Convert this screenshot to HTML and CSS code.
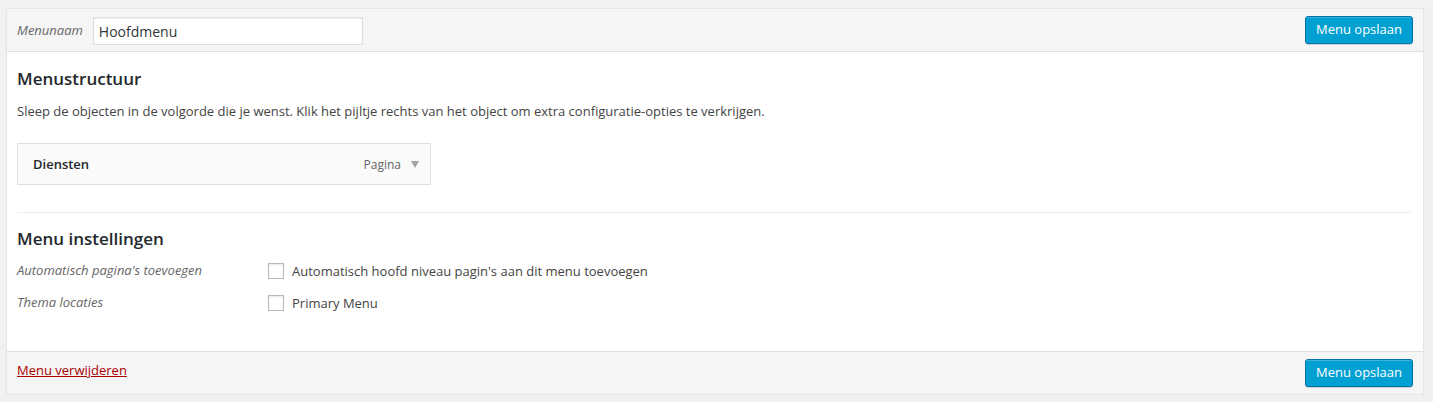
FILE: index.html
```html
<!DOCTYPE html>
<html lang="nl">
<head>
<meta charset="utf-8">
<title>Menu</title>
<link rel="stylesheet" href="styles.css">
</head>
<body>
<div class="menu-edit">
  <div class="menu-header">
    <label class="menu-name-label">Menunaam</label>
    <input class="menu-name" type="text" value="Hoofdmenu">
    <span class="spacer"></span>
    <button class="btn-primary">Menu opslaan</button>
  </div>
  <div class="menu-body">
    <h3 class="title">Menustructuur</h3>
    <p class="desc">Sleep de objecten in de volgorde die je wenst. Klik het pijltje rechts van het object om extra configuratie-opties te verkrijgen.</p>
    <div class="menu-item">
      <span class="item-title">Diensten</span>
      <span class="item-type">Pagina</span>
      <span class="item-arrow"></span>
    </div>
    <div class="settings">
      <h3 class="title">Menu instellingen</h3>
      <div class="setting-row">
        <span class="setting-label">Automatisch pagina's toevoegen</span>
        <label class="check"><span class="box"></span>Automatisch hoofd niveau pagin's aan dit menu toevoegen</label>
      </div>
      <div class="setting-row">
        <span class="setting-label">Thema locaties</span>
        <label class="check"><span class="box"></span>Primary Menu</label>
      </div>
    </div>
  </div>
  <div class="menu-footer">
    <a class="delete" href="#">Menu verwijderen</a>
    <span class="spacer"></span>
    <button class="btn-primary">Menu opslaan</button>
  </div>
</div>
</body>
</html>
```
FILE: styles.css
```css
html, body {
  margin: 0;
  padding: 0;
  background: #f1f1f1;
}
body {
  padding: 8px 9px 0 6px;
  font-family: "Open Sans", "Liberation Sans", sans-serif;
  font-size: 13px;
  color: #444;
}
.menu-edit {
  border: 1px solid #e5e5e5;
  background: #fff;
  box-shadow: 0 1px 1px rgba(0,0,0,0.04);
}
.menu-header {
  display: flex;
  align-items: center;
  background: #f5f5f5;
  border-bottom: 1px solid #dfdfdf;
  height: 42px;
  padding: 0 10px 0 10px;
}
.spacer { flex: 1; }
.menu-name-label {
  font-style: italic;
  color: #666;
  font-size: 13px;
  margin-right: 10px;
}
.menu-name {
  box-sizing: border-box;
  width: 270px;
  height: 28px;
  border: 1px solid #ddd;
  box-shadow: inset 0 1px 2px rgba(0,0,0,0.07);
  font-family: "Open Sans", "Liberation Sans", sans-serif;
  font-size: 14px;
  color: #32373c;
  padding: 0 5px;
  margin: 0;
  margin-top: 2px;
}
.btn-primary {
  box-sizing: border-box;
  height: 28px;
  padding: 0 10px 2px;
  background: #00a0d2;
  border: 1px solid #0073aa;
  border-radius: 3px;
  color: #fff;
  font-family: "Open Sans", "Liberation Sans", sans-serif;
  font-size: 13px;
  box-shadow: inset 0 1px 0 rgba(120,200,230,0.5), 0 1px 0 rgba(0,0,0,0.15);
  margin-top: 0;
}
.menu-body {
  padding: 8px 12px 32px 10px;
}
.title {
  margin: 7px 0 0;
  font-size: 17px;
  font-weight: 600;
  color: #23282d;
  line-height: 24px;
}
.desc {
  margin: 10px 0 0;
  line-height: 20px;
}
.menu-item {
  box-sizing: border-box;
  width: 414px;
  height: 42px;
  margin-top: 22px;
  border: 1px solid #dfdfdf;
  background: #fafafa;
  display: flex;
  align-items: center;
  padding: 0 11px 0 15px;
}
.item-title {
  flex: 1;
  font-weight: 600;
  color: #23282d;
}
.item-type {
  color: #666;
  font-size: 12px;
  margin-right: 10px;
}
.item-arrow {
  width: 0;
  height: 0;
  border-left: 4px solid transparent;
  border-right: 4px solid transparent;
  border-top: 7px solid #a0a5aa;
  margin-top: 1px;
}
.settings {
  margin-top: 27px;
  border-top: 1px solid #eee;
  padding-top: 7px;
}
.setting-row {
  display: flex;
  align-items: center;
  height: 32px;
}
.settings .title + .setting-row { margin-top: 4px; }
.setting-label {
  width: 251px;
  font-style: italic;
  color: #666;
  font-size: 13px;
  margin-top: -2px;
}
.check {
  display: flex;
  align-items: center;
  color: #444;
}
.box {
  box-sizing: border-box;
  width: 16px;
  height: 16px;
  border: 1px solid #b4b9be;
  background: #fff;
  box-shadow: inset 0 1px 2px rgba(0,0,0,0.1);
  margin-right: 8px;
}
.menu-footer {
  display: flex;
  align-items: center;
  background: #f5f5f5;
  border-top: 1px solid #dfdfdf;
  height: 42px;
  padding: 0 10px 0 10px;
}
.delete {
  color: #a00;
  text-decoration: underline;
  font-size: 13px;
  margin-top: -6px;
}
```
